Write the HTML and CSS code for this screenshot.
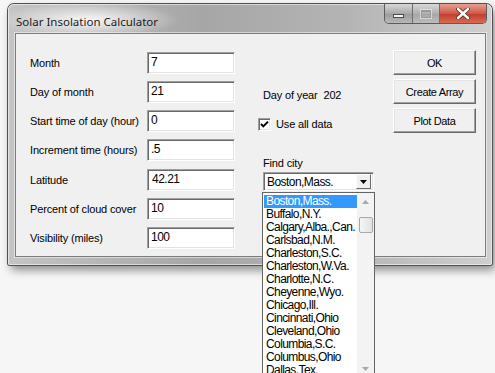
FILE: index.html
```html
<!DOCTYPE html>
<html lang="en">
<head>
    <meta charset="UTF-8">
    <title>Solar Insolation Calculator</title>
    <link rel="stylesheet" href="styles.css">
</head>
<body>
    <div class="window">
        <div class="titleBar">
            <span class="titleText">Solar Insolation Calculator</span>
            <div class="captionButtons">
                <span class="capBtn capMin"><span class="minGlyph"></span></span>
                <span class="capBtn capMax"><span class="maxGlyph"></span></span>
                <span class="capBtn capClose">
                    <svg width="14" height="11" viewBox="0 0 14 11">
                        <path d="M2 1 L12 10 M12 1 L2 10" stroke="#5a2a24" stroke-width="4" stroke-linecap="round"/>
                        <path d="M2 1 L12 10 M12 1 L2 10" stroke="#fff" stroke-width="2.4" stroke-linecap="round"/>
                    </svg>
                </span>
            </div>
        </div>
        <div class="client">
            <div class="form">
                <label class="fieldLabel">Month</label>
                <div class="field">7</div>
                <label class="fieldLabel">Day of month</label>
                <div class="field">21</div>
                <label class="fieldLabel">Start time of day (hour)</label>
                <div class="field">0</div>
                <label class="fieldLabel">Increment time (hours)</label>
                <div class="field">.5</div>
                <label class="fieldLabel">Latitude</label>
                <div class="field indent">42.21</div>
                <label class="fieldLabel">Percent of cloud cover</label>
                <div class="field">10</div>
                <label class="fieldLabel">Visibility (miles)</label>
                <div class="field">100</div>
            </div>
            <div class="middle">
                <div class="dayOfYear">Day of year&nbsp; 202</div>
                <div class="checkRow">
                    <span class="checkBox">
                        <svg width="9" height="9" viewBox="0 0 9 9">
                            <path d="M1 4 L3.3 6.4 L8 1.6" fill="none" stroke="#000" stroke-width="2"/>
                        </svg>
                    </span>
                    <span>Use all data</span>
                </div>
                <div class="findCity">Find city</div>
                <div class="combo">
                    <span class="comboText">Boston,Mass.</span>
                    <span class="comboDrop">
                        <svg width="7" height="4" viewBox="0 0 7 4"><path d="M0 0 H7 L3.5 4 Z" fill="#000"/></svg>
                    </span>
                    <div class="cityList">
                        <ul class="cityItems">
                            <li class="selected">Boston,Mass.</li>
                            <li>Buffalo,N.Y.</li>
                            <li>Calgary,Alba.,Can.</li>
                            <li>Carlsbad,N.M.</li>
                            <li>Charleston,S.C.</li>
                            <li>Charleston,W.Va.</li>
                            <li>Charlotte,N.C.</li>
                            <li>Cheyenne,Wyo.</li>
                            <li>Chicago,Ill.</li>
                            <li>Cincinnati,Ohio</li>
                            <li>Cleveland,Ohio</li>
                            <li>Columbia,S.C.</li>
                            <li>Columbus,Ohio</li>
                            <li>Dallas,Tex.</li>
                        </ul>
                        <div class="scrollBar">
                            <span class="arrow">
                                <svg width="7" height="4" viewBox="0 0 7 4"><path d="M0 4 H7 L3.5 0 Z" fill="#a8a8a8"/></svg>
                            </span>
                            <div class="track">
                                <span class="thumb"></span>
                            </div>
                            <span class="arrow">
                                <svg width="7" height="4" viewBox="0 0 7 4"><path d="M0 0 H7 L3.5 4 Z" fill="#a8a8a8"/></svg>
                            </span>
                        </div>
                    </div>
                </div>
            </div>
            <div class="buttons">
                <button class="dlgButton">OK</button>
                <button class="dlgButton">Create Array</button>
                <button class="dlgButton">Plot Data</button>
            </div>
        </div>
    </div>
</body>
</html>
```

FILE: styles.css
```css
* {
    box-sizing: border-box;
}

html,
body {
    margin: 0;
    width: 495px;
    height: 373px;
    overflow: hidden;
    background-color: #f6f6f6;
}

body {
    position: relative;
    font-family: "Liberation Sans", Arial, sans-serif;
    font-size: 11px;
    letter-spacing: -0.15px;
    color: #000;
}

/* window frame */

.window {
    position: absolute;
    left: 8px;
    top: 4px;
    width: 484px;
    height: 261px;
    padding: 0 6px 8px 7px;
    border-radius: 6px 6px 2px 2px;
    background:
        radial-gradient(ellipse 90px 18px at 80px 16px, rgba(255, 255, 255, 0.9), rgba(255, 255, 255, 0) 100%),
        linear-gradient(90deg, #c4c4c4 0%, #a6a6a6 40%, #b4b4b4 70%, #cfcfcf 100%);
    box-shadow:
        0 0 0 1px #505050,
        inset 0 0 0 1px rgba(255, 255, 255, 0.55),
        3px 5px 10px rgba(0, 0, 0, 0.45);
    display: flex;
    flex-direction: column;
}

.titleBar {
    height: 29px;
    display: flex;
    align-items: flex-start;
}

.titleText {
    margin-top: 11px;
    margin-left: 1px;
    font-family: "Noto Sans", "Open Sans", sans-serif;
    font-size: 11.5px;
    letter-spacing: 0;
    line-height: 14px;
    color: #1a1a1a;
}

.captionButtons {
    margin-left: auto;
    margin-right: -1px;
    display: flex;
    height: 20px;
    border: 1px solid #5c5c5c;
    border-top: none;
    border-radius: 0 0 5px 5px;
    overflow: hidden;
}

.capBtn {
    height: 100%;
    display: flex;
    align-items: center;
    justify-content: center;
}

.capMin {
    width: 28px;
    background: linear-gradient(#d8d8d8, #a9a9a9 50%, #9a9a9a 51%, #b8b8b8);
    border-right: 1px solid #6e6e6e;
}

.capMax {
    width: 27px;
    background: linear-gradient(#d8d8d8, #b0b0b0 50%, #a4a4a4 51%, #bcbcbc);
    border-right: 1px solid #6e6e6e;
}

.capClose {
    width: 46px;
    background: linear-gradient(#e8a093, #d0584a 50%, #c03a2b 51%, #d86b55);
}

.minGlyph {
    margin-top: 5px;
    width: 11px;
    height: 4px;
    background-color: #f4f4f4;
    border: 1px solid #4a4a4a;
}

.maxGlyph {
    width: 10px;
    height: 8px;
    border: 1px solid #9a9a9a;
    border-top-width: 2px;
    box-shadow: 0 0 0 1px rgba(255, 255, 255, 0.5);
}

/* client area */

.client {
    flex: 1;
    background-color: #f0f0f0;
    border: 1px solid #7c7c7c;
    box-shadow: 0 0 0 1px rgba(255, 255, 255, 0.5);
    padding: 16px 0 0 14px;
    display: flex;
    align-items: flex-start;
}

.form {
    margin-top: 2px;
    display: grid;
    grid-template-columns: 117px 88px;
    grid-auto-rows: 22px;
    row-gap: 7.17px;
    align-items: center;
}

.fieldLabel {
    line-height: 14px;
}

.field,
.combo,
.checkBox {
    background-color: #fff;
    border-top: 1px solid #a0a0a0;
    border-left: 1px solid #a0a0a0;
    border-right: 1px solid #fff;
    border-bottom: 1px solid #fff;
    box-shadow: inset 1px 1px 0 #696969, inset -1px -1px 0 #e3e3e3;
}

.field {
    height: 22px;
    padding: 2px 0 0 3px;
    font-size: 12px;
    letter-spacing: -0.5px;
    line-height: 15px;
}

.field.indent {
    padding-left: 4px;
}

.middle {
    margin-left: 28px;
    width: 111px;
    display: flex;
    flex-direction: column;
}

.dayOfYear {
    margin-top: 38px;
    line-height: 14px;
}

.checkRow {
    margin-top: 15px;
    margin-left: -5px;
    display: flex;
    align-items: center;
    gap: 5px;
    line-height: 14px;
}

.checkBox {
    width: 13px;
    height: 13px;
    display: flex;
    align-items: center;
    justify-content: center;
}

.findCity {
    margin-top: 25px;
    line-height: 14px;
}

.combo {
    position: relative;
    margin-top: 2px;
    height: 19px;
    display: flex;
    align-items: center;
    padding: 0 2px 0 3px;
}

.comboText {
    flex: 1;
    font-size: 12px;
    letter-spacing: -0.55px;
}

.comboDrop {
    width: 15px;
    height: 15px;
    display: flex;
    align-items: center;
    justify-content: center;
    background-color: #f0f0f0;
    border-top: 1px solid #fff;
    border-left: 1px solid #fff;
    border-right: 1px solid #696969;
    border-bottom: 1px solid #696969;
}

/* dropped list, lies over the window */

.cityList {
    position: absolute;
    left: -2px;
    top: 19px;
    width: 113px;
    height: 186px;
    background-color: #fff;
    border: 1px solid #646464;
    display: flex;
}

.cityItems {
    flex: 1;
    list-style: none;
    margin: 0;
    padding: 2px 0 0 1px;
    font-size: 12px;
    letter-spacing: -0.6px;
}

.cityItems li {
    height: 13px;
    line-height: 13px;
    padding-left: 2px;
    white-space: nowrap;
}

.cityItems li.selected {
    background-color: #3399ff;
    color: #fff;
}

.scrollBar {
    width: 17px;
    background-color: #f3f3f3;
    display: flex;
    flex-direction: column;
}

.arrow {
    height: 17px;
    display: flex;
    align-items: center;
    justify-content: center;
}

.track {
    flex: 1;
    padding: 7px 1px 0 2px;
}

.thumb {
    display: block;
    height: 16px;
    border: 1px solid #a8a8a8;
    border-radius: 2px;
    background: linear-gradient(90deg, #f4f4f4, #e2e2e2);
}

/* buttons */

.buttons {
    margin-left: 19px;
    width: 83px;
    display: flex;
    flex-direction: column;
    gap: 4px;
}

.dlgButton {
    height: 25px;
    margin: 0;
    padding: 0;
    font-family: "Liberation Sans", Arial, sans-serif;
    font-size: 11px;
    letter-spacing: -0.35px;
    color: #000;
    background-color: #f0f0f0;
    border-top: 1px solid #fff;
    border-left: 1px solid #fff;
    border-right: 1px solid #696969;
    border-bottom: 1px solid #696969;
    box-shadow: inset -1px -1px 0 #a0a0a0, inset 1px 1px 0 #e3e3e3;
}
```
